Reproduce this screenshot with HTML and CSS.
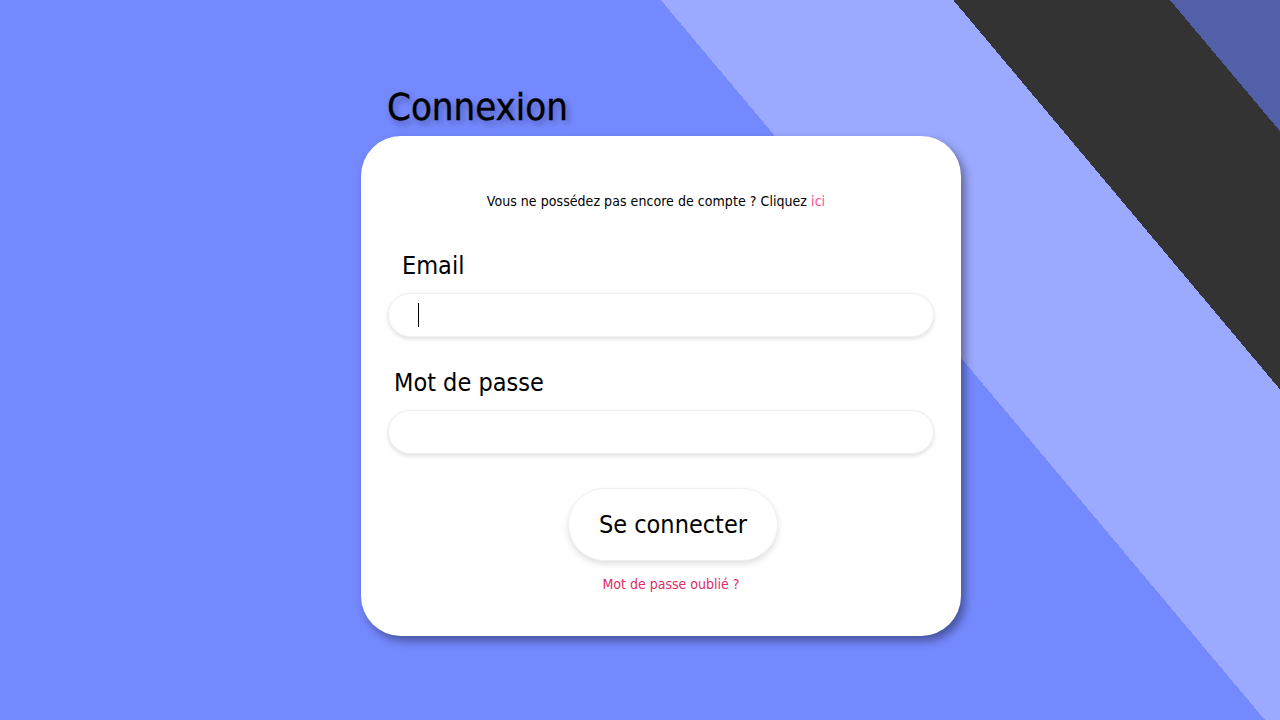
FILE: index.html
```html
<!DOCTYPE html>
<html lang="fr">
<head>
<meta charset="utf-8">
<title>Connexion</title>
<link rel="stylesheet" href="styles.css">
</head>
<body>
<main class="page">
  <section class="login">
    <h1 class="login-title">Connexion</h1>
    <form class="card">
      <p class="signup">Vous ne possédez pas encore de compte ? Cliquez <a class="signup-link" href="#">ici</a></p>
      <label class="field-label field-label--email" for="email">Email</label>
      <div class="field">
        <input class="field-input" id="email" type="email" autofocus>
        <span class="caret"></span>
      </div>
      <label class="field-label field-label--pass" for="password">Mot de passe</label>
      <div class="field">
        <input class="field-input" id="password" type="password">
      </div>
      <div class="actions">
        <button class="submit" type="button">Se connecter</button>
        <a class="forgot" href="#">Mot de passe oublié ?</a>
      </div>
    </form>
  </section>
</main>
</body>
</html>
```

FILE: styles.css
```css
* {
  box-sizing: border-box;
}

html, body {
  margin: 0;
  height: 100%;
}

body {
  font-family: "DejaVu Sans Condensed", "DejaVu Sans", sans-serif;
  font-stretch: condensed;
  color: #000;
  background: linear-gradient(50deg,
    #7589ff 0, #7589ff 969px,
    #9baaff 969px, #9baaff 1193px,
    #333333 1193px, #333333 1359px,
    #5160a8 1359px, #5160a8 100%);
  overflow: hidden;
}

.page {
  display: flex;
  justify-content: center;
  padding: 84px 0 0 42px;
}

.login {
  width: 600px;
  display: flex;
  flex-direction: column;
}

.login-title {
  margin: 0 0 6px 26px;
  font-size: 38px;
  line-height: 46px;
  font-weight: normal;
  -webkit-text-stroke: 0.4px #000;
  text-shadow: 3px 4px 6px rgba(0, 0, 0, 0.35);
}

.card {
  background: #fff;
  border-radius: 40px;
  box-shadow: 4px 5px 10px rgba(0, 0, 0, 0.4);
  padding: 55px 27px 42px;
  display: flex;
  flex-direction: column;
}

.signup {
  margin: 0 0 40px;
  font-size: 14px;
  line-height: 20px;
  text-align: center;
  padding-right: 10px;
  letter-spacing: 0.05px;
}

.signup-link {
  color: #ff4f8e;
  text-decoration: none;
}

.field-label {
  display: block;
  font-size: 25px;
  line-height: 30px;
}

.field-label--email {
  margin-left: 14px;
}

.field-label--pass {
  margin: 31px 0 0 6px;
}

.field {
  position: relative;
  margin-top: 12px;
}

.field-input {
  display: block;
  width: 100%;
  height: 44px;
  padding: 0 0 0 29px;
  border: 1px solid #f0f0f0;
  border-radius: 22px;
  box-shadow: 0 2px 4px rgba(0, 0, 0, 0.13);
  background: #fff;
  font-family: inherit;
  font-size: 20px;
  outline: none;
  caret-color: transparent;
}

.caret {
  position: absolute;
  left: 30px;
  top: 10px;
  width: 1px;
  height: 24px;
  background: #000;
}

.actions {
  display: flex;
  flex-direction: column;
  align-items: center;
  margin-top: 34px;
  padding-left: 24px;
}

.submit {
  width: 210px;
  height: 73px;
  border: 1px solid #f0f0f0;
  border-radius: 37px;
  background: #fff;
  box-shadow: 0 3px 6px rgba(0, 0, 0, 0.13);
  font-family: inherit;
  font-stretch: condensed;
  font-size: 25px;
  color: #000;
  padding: 0;
}

.forgot {
  margin-top: 13px;
  margin-left: -4px;
  font-size: 14px;
  line-height: 20px;
  color: #e32a66;
  text-decoration: none;
}
```
